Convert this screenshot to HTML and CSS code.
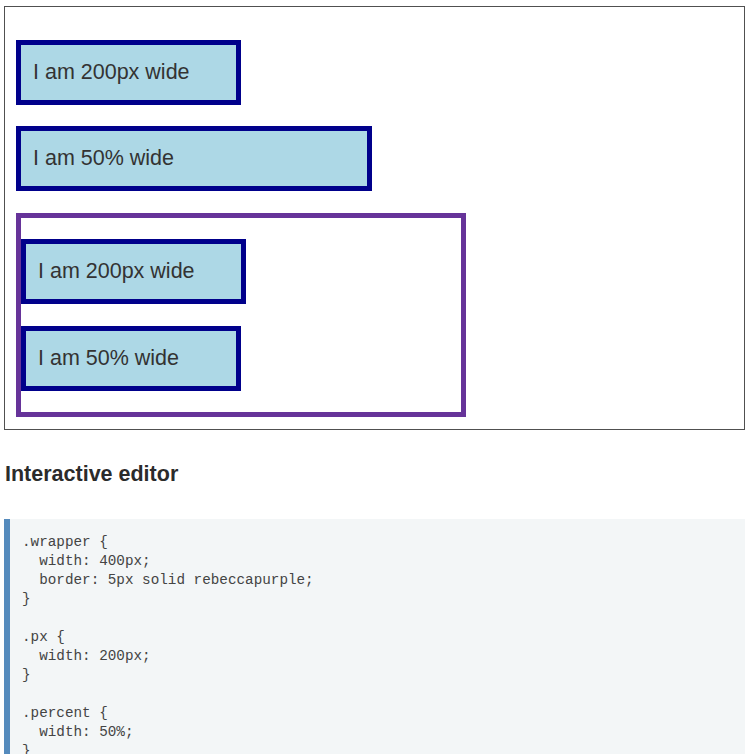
FILE: index.html
```html
<!DOCTYPE html>
<html lang="en">
<head>
<meta charset="utf-8">
<title>Sizing</title>
<link rel="stylesheet" href="styles.css">
</head>
<body>
<div class="frame">
  <div class="box px">I am 200px wide</div>
  <div class="box percent-outer">I am 50% wide</div>
  <div class="wrapper">
    <div class="box px">I am 200px wide</div>
    <div class="box percent">I am 50% wide</div>
  </div>
</div>
<h3 class="heading">Interactive editor</h3>
<pre class="code">.wrapper {
  width: 400px;
  border: 5px solid rebeccapurple;
}

.px {
  width: 200px;
}

.percent {
  width: 50%;
}</pre>
</body>
</html>
```
FILE: styles.css
```css
html, body {
  margin: 0;
  overflow: hidden;
}
body {
  padding: 6px 6px 0 4px;
  background: #fff;
  font-family: "Liberation Sans", Arial, sans-serif;
  color: #333;
}
.frame {
  width: 741px;
  box-sizing: border-box;
  border: 1px solid #505050;
  padding: 11px 0 12px 11px;
}
.box {
  box-sizing: border-box;
  border: 5px solid #00008b;
  background: #add8e6;
  padding: 15px 10px 15px 12px;
  font-size: 21.5px;
  line-height: 25px;
  color: #333;
  white-space: nowrap;
}
.frame > .box:first-child { margin-top: 22px; }
.frame > .percent-outer { margin-top: 21px; width: 356px; }
.px { width: 225px; }
.wrapper {
  box-sizing: border-box;
  width: 450px;
  margin-top: 22px;
  border: 5px solid #663399;
  padding: 21px 0;
}
.wrapper .percent {
  width: 50%;
  margin-top: 22px;
}
.heading {
  margin: 31px 0 0 1px;
  font-size: 21.5px;
  line-height: 26px;
  font-weight: bold;
  color: #2b2b2b;
}
.code {
  margin: 32px 0 0 0;
  width: 741px;
  box-sizing: border-box;
  border-left: 6px solid #558bbd;
  background: #f3f6f7;
  padding: 14px 0 20px 12px;
  font-family: "Liberation Mono", "DejaVu Sans Mono", monospace;
  font-size: 14.3px;
  line-height: 19px;
  color: #444;
}
```
